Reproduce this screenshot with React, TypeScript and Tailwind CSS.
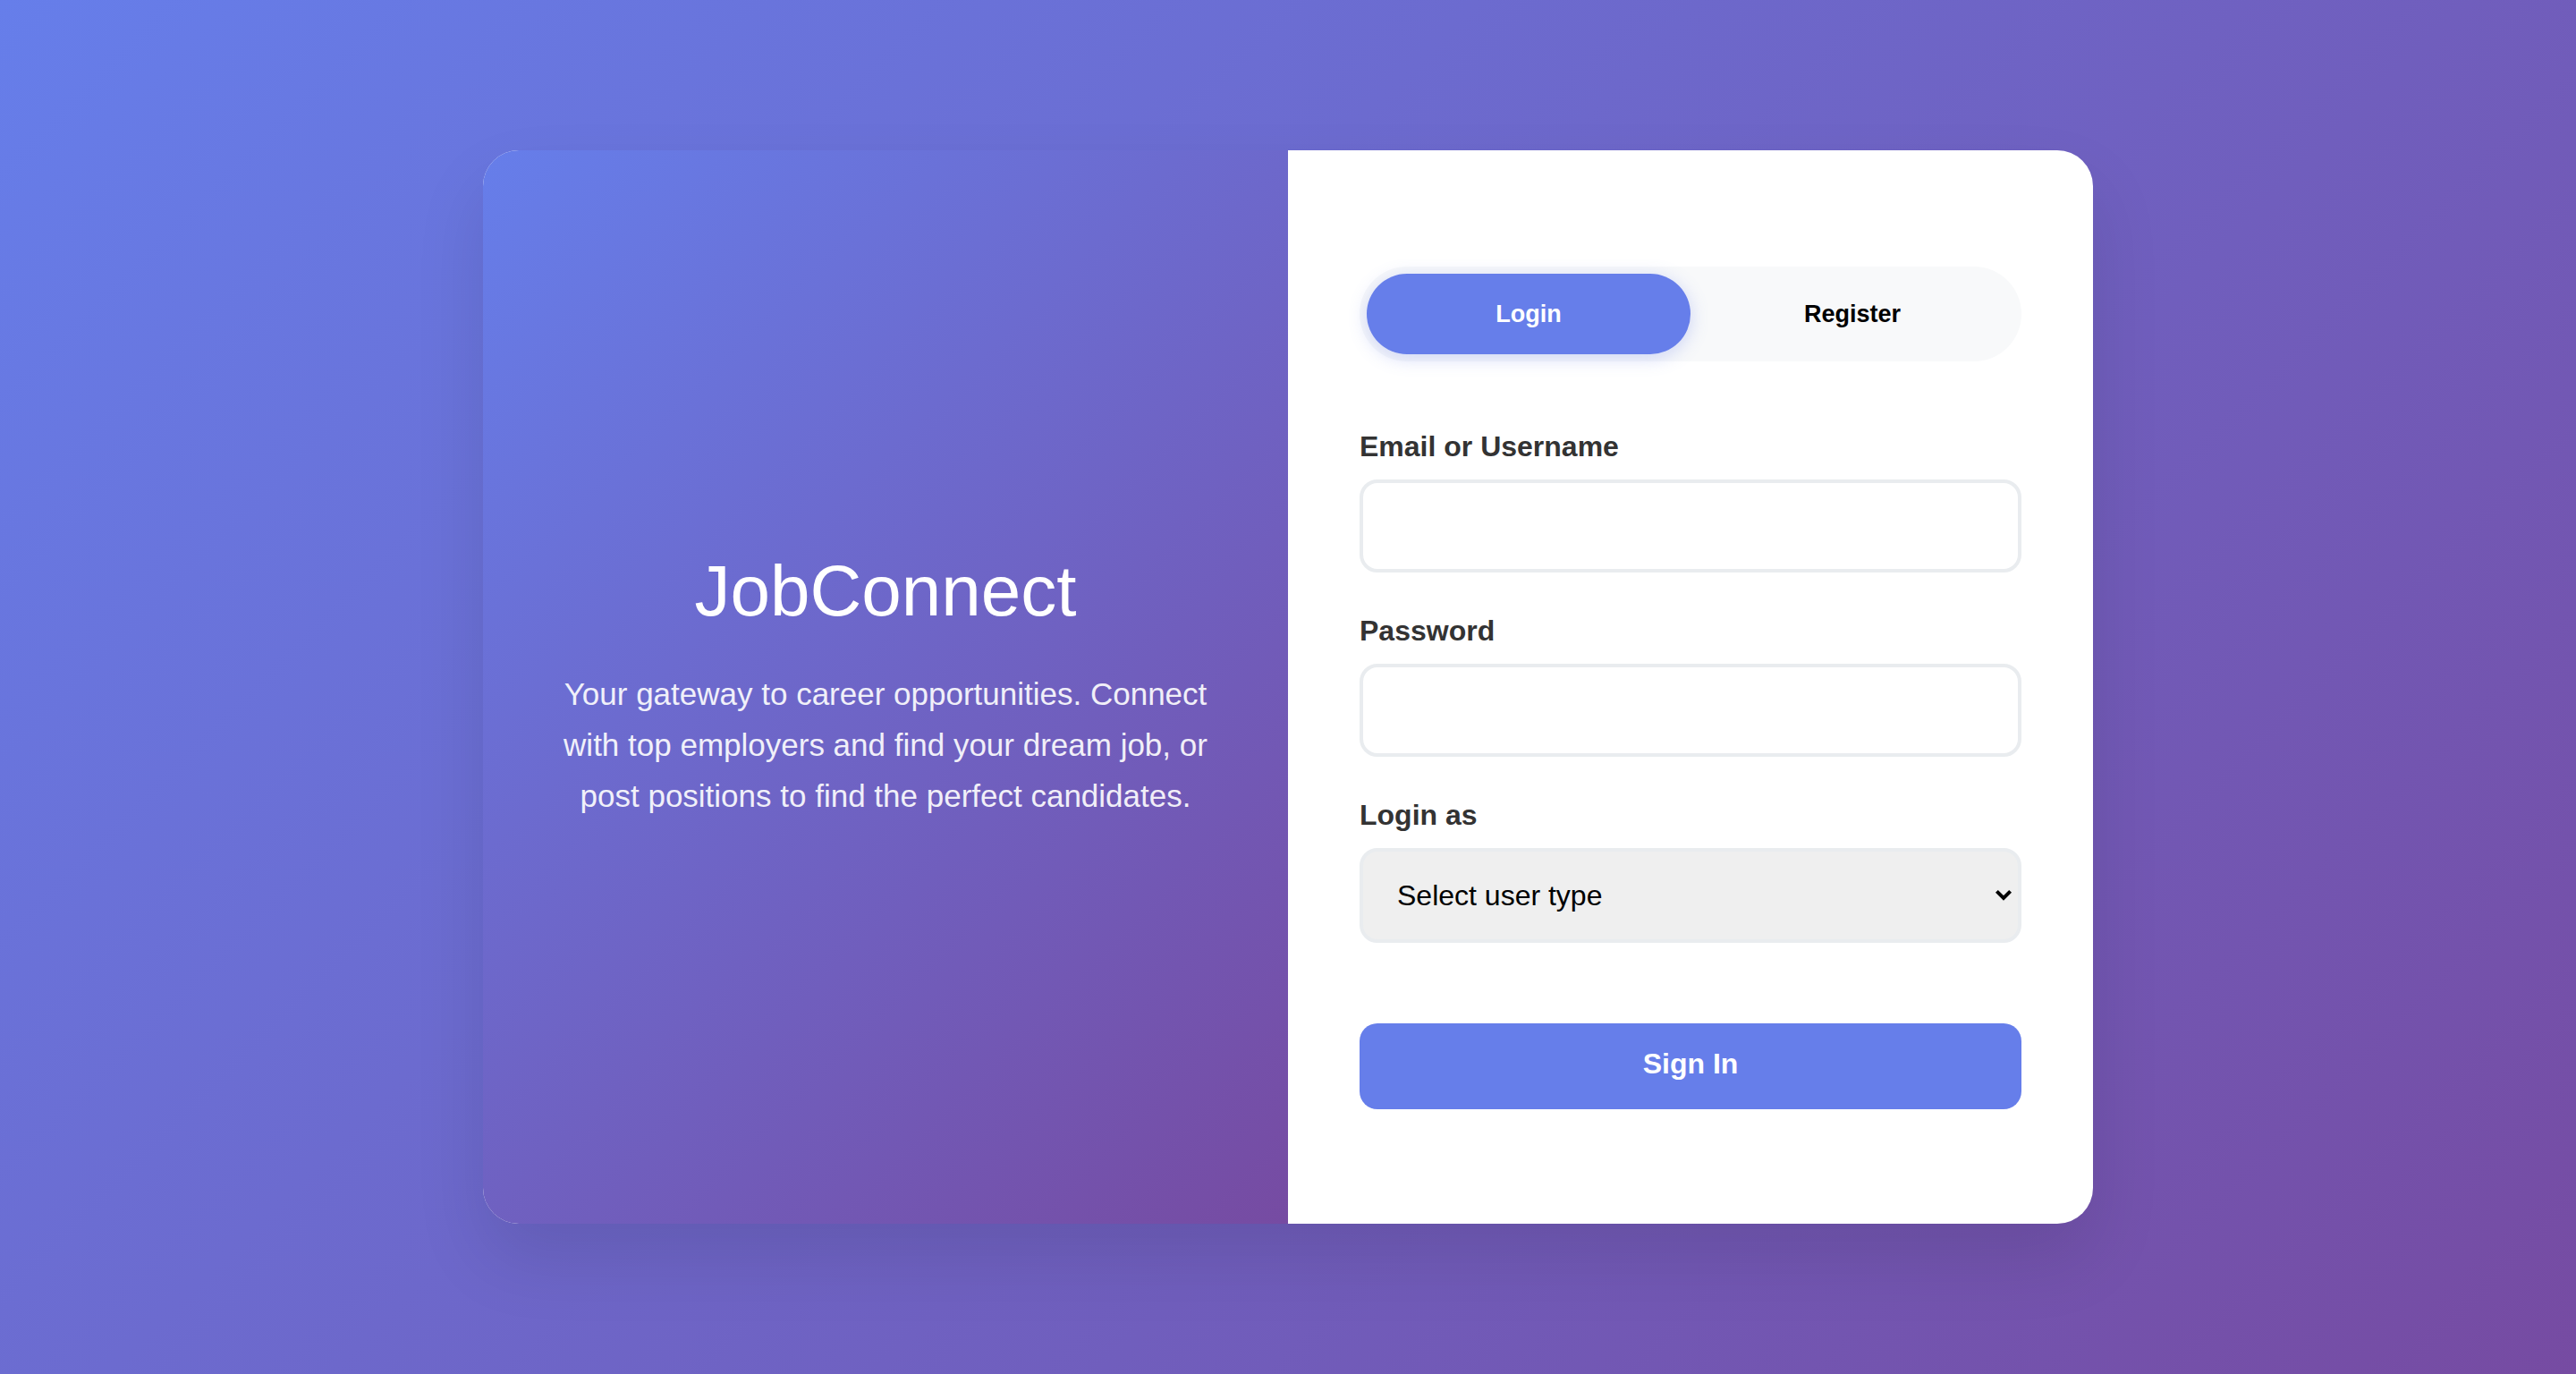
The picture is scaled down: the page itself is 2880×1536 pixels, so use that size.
import { useState } from "react";
import type { InputHTMLAttributes, ReactNode } from "react";

type Mode = "login" | "register";

const controlClass =
  "block w-full rounded-[20px] border-4 border-[#e9ecef] text-[32px] text-black outline-none focus:border-[#667eea]";

function Field({ id, label, children }: { id: string; label: string; children: ReactNode }) {
  return (
    <div>
      <label htmlFor={id} className="mb-[19px] block text-[32px] leading-9 font-semibold text-[#333333]">
        {label}
      </label>
      {children}
    </div>
  );
}

function TextInput(props: InputHTMLAttributes<HTMLInputElement>) {
  return <input {...props} className={`${controlClass} h-[104px] bg-white px-[30px]`} />;
}

function TabButton({ active, onClick, children }: { active: boolean; onClick: () => void; children: ReactNode }) {
  return (
    <button
      type="button"
      aria-pressed={active}
      onClick={onClick}
      className={`flex-1 cursor-pointer rounded-[50px] py-[30px] text-center text-[27px] leading-[30px] font-semibold ${
        active ? "bg-[#667eea] text-white shadow-[0_4px_20px_rgba(102,126,234,0.3)]" : "text-black"
      }`}
    >
      {children}
    </button>
  );
}

export default function App() {
  const [mode, setMode] = useState<Mode>("login");

  return (
    <main className="flex min-h-screen items-center justify-center bg-linear-[135deg,#667eea_0%,#764ba2_100%] p-10 font-['Liberation_Sans',Arial,sans-serif]">
      <div className="flex min-h-[1200px] w-full max-w-[1800px] overflow-hidden rounded-[40px] bg-white shadow-[0_40px_80px_rgba(0,0,0,0.1)]">
        <section className="flex flex-1 flex-col items-center justify-center bg-linear-[135deg,#667eea_0%,#764ba2_100%] px-20 pt-[76px] pb-20 text-center text-white">
          <h1 className="mb-10 text-[80px] leading-[92px] font-normal">JobConnect</h1>
          <p className="text-[35px] leading-[57px] opacity-90">
            Your gateway to career opportunities. Connect with top employers and find your dream job, or post positions
            to find the perfect candidates.
          </p>
        </section>

        <section className="flex flex-1 flex-col justify-center px-20 pt-[82px] pb-20">
          <div className="mb-[77px] flex rounded-[60px] bg-[#f8f9fa] p-2">
            <TabButton active={mode === "login"} onClick={() => setMode("login")}>
              Login
            </TabButton>
            <TabButton active={mode === "register"} onClick={() => setMode("register")}>
              Register
            </TabButton>
          </div>

          <form className="flex flex-col gap-[47px]" onSubmit={(event) => event.preventDefault()}>
            <Field id="identifier" label="Email or Username">
              <TextInput id="identifier" type="text" autoComplete="username" />
            </Field>
            <Field id="password" label="Password">
              <TextInput id="password" type="password" autoComplete="current-password" />
            </Field>
            <Field id="user-type" label="Login as">
              <div className="relative">
                <select
                  id="user-type"
                  defaultValue=""
                  className={`${controlClass} h-[106px] appearance-none bg-[#efefef] px-[38px]`}
                >
                  <option value="">Select user type</option>
                  <option value="seeker">Job Seeker</option>
                  <option value="employer">Employer</option>
                </select>
                <svg
                  aria-hidden="true"
                  viewBox="0 0 20 14"
                  className="pointer-events-none absolute inset-y-0 right-2.5 my-auto h-3.5 w-5"
                  fill="none"
                  stroke="#000"
                  strokeWidth="4"
                >
                  <path d="M2.4 2.4 10 10 17.6 2.4" />
                </svg>
              </div>
            </Field>
            <button
              type="submit"
              className="mt-[43px] block w-full cursor-pointer rounded-[20px] bg-[#667eea] pt-[27px] pb-[33px] text-[32px] leading-9 font-semibold text-white"
            >
              Sign In
            </button>
          </form>
        </section>
      </div>
    </main>
  );
}
